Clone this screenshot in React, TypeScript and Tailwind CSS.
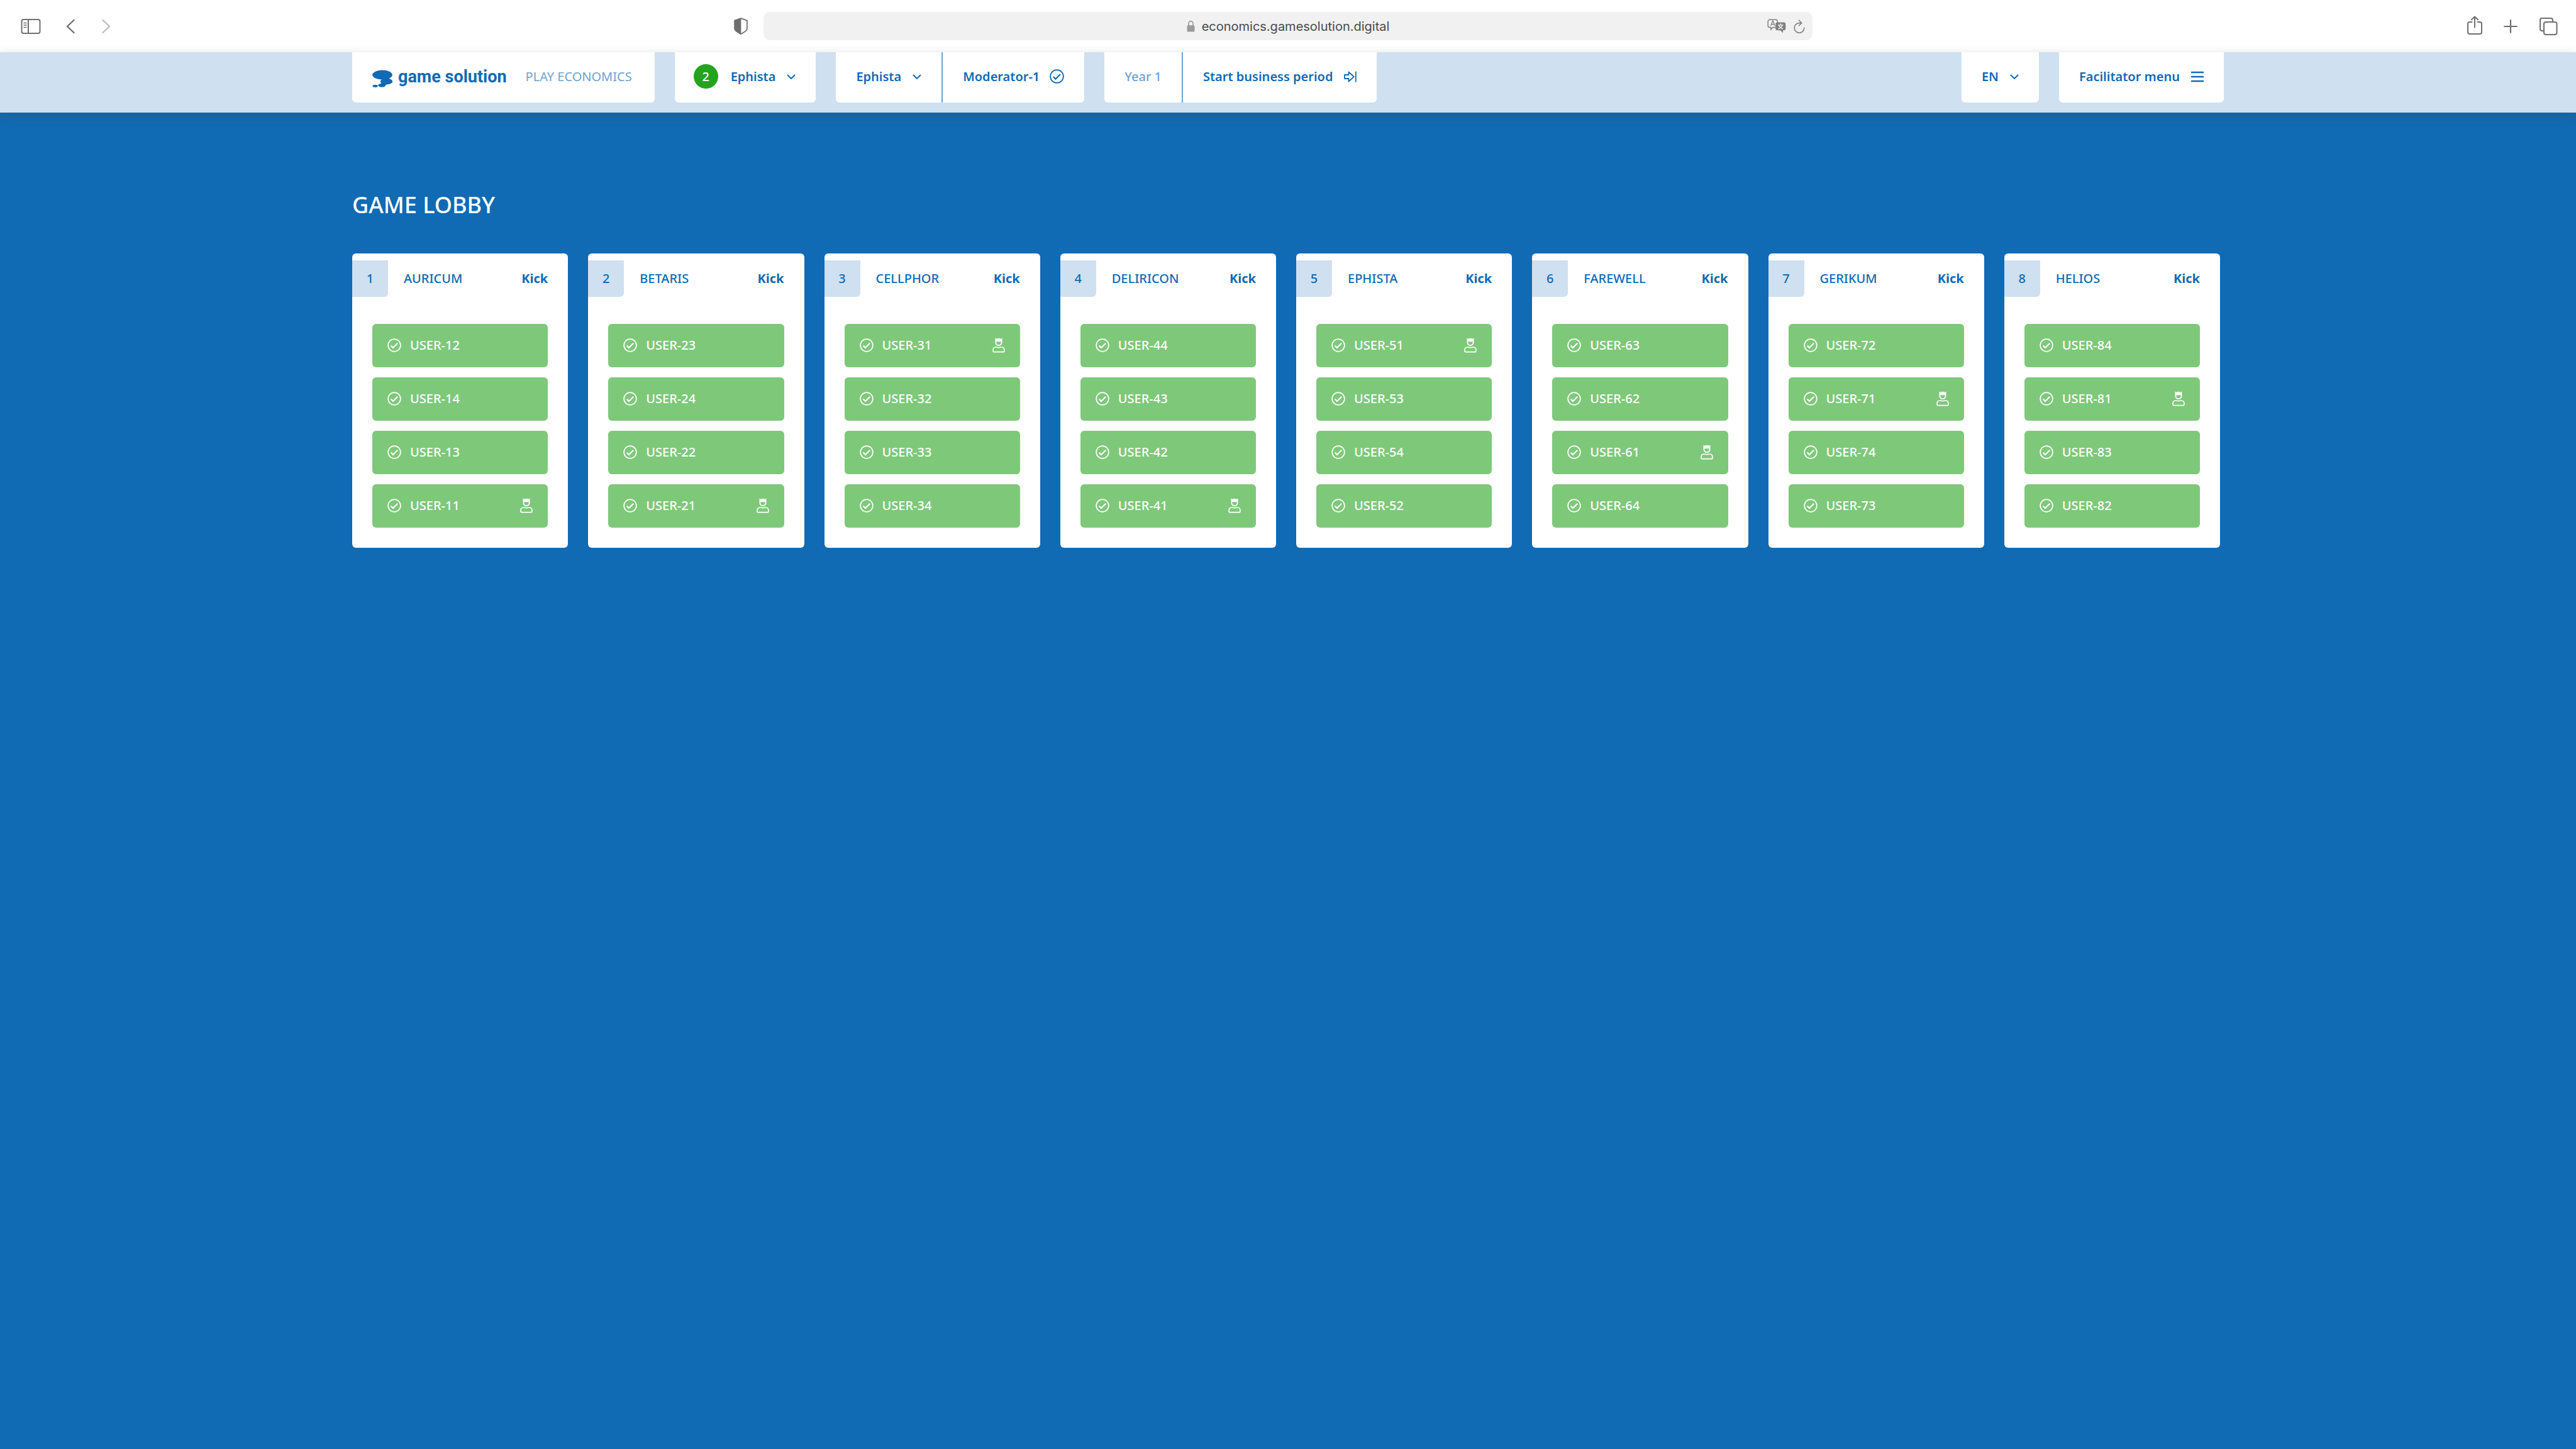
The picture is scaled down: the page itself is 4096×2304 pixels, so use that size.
import type { ReactNode } from "react";

type Team = { name: string; users: string[]; chief: string };

const teams: Team[] = [
  { name: "AURICUM", users: ["USER-12", "USER-14", "USER-13", "USER-11"], chief: "USER-11" },
  { name: "BETARIS", users: ["USER-23", "USER-24", "USER-22", "USER-21"], chief: "USER-21" },
  { name: "CELLPHOR", users: ["USER-31", "USER-32", "USER-33", "USER-34"], chief: "USER-31" },
  { name: "DELIRICON", users: ["USER-44", "USER-43", "USER-42", "USER-41"], chief: "USER-41" },
  { name: "EPHISTA", users: ["USER-51", "USER-53", "USER-54", "USER-52"], chief: "USER-51" },
  { name: "FAREWELL", users: ["USER-63", "USER-62", "USER-61", "USER-64"], chief: "USER-61" },
  { name: "GERIKUM", users: ["USER-72", "USER-71", "USER-74", "USER-73"], chief: "USER-71" },
  { name: "HELIOS", users: ["USER-84", "USER-81", "USER-83", "USER-82"], chief: "USER-81" },
];

const companyNames = ["Ephista", "Auricum", "Betaris", "Cellphor", "Deliricon", "Farewell", "Gerikum", "Helios"];

function CheckCircle({ className }: { className: string }) {
  return (
    <svg viewBox="0 0 22 22" className={className} fill="none" stroke="currentColor" aria-hidden="true">
      <circle cx="11" cy="11" r="9.9" strokeWidth="1.7" />
      <path d="M5.6 11.5 9 15l7.2-7.3" strokeWidth="2.1" />
    </svg>
  );
}

function Chief() {
  return (
    <svg viewBox="0 0 20 24" className="h-6 w-5 shrink-0" role="img" aria-label="Team lead">
      <path
        d="M4.5.6 7.2 1.7 10 .6l2.8 1.1L15.5.6V7.5a5.5 5.5 0 0 1-11 0ZM6.3 6.200v1.300a3.700 3.700 0 0 0 7.400 0V6.200Z"
        fill="white"
        fillRule="evenodd"
      />
      <path
        d="M5.200 15c1.800 0 2.600.6 4.800.6s3-.6 4.800-.6c2.700 0 4.200 2.300 4.200 5.200 0 1.600-.4 2.500-1.500 2.500h-15C1.400 22.700 1 21.800 1 20.200 1 17.300 2.500 15 5.200 15Z"
        fill="none"
        stroke="white"
        strokeWidth="1.7"
      />
    </svg>
  );
}

function Chevron() {
  return (
    <svg viewBox="0 0 14 8" className="pointer-events-none -ml-[14px] h-2 w-[14px]" fill="none" stroke="currentColor" aria-hidden="true">
      <path d="m1 1 6 6 6-6" strokeWidth="2" />
    </svg>
  );
}

function Dropdown({ label, options }: { label: string; options: string[] }) {
  return (
    <span className="flex items-center">
      <select
        aria-label={label}
        className="field-sizing-content h-full cursor-pointer appearance-none bg-transparent pr-8 font-semibold"
      >
        {options.map((o) => (
          <option key={o}>{o}</option>
        ))}
      </select>
      <Chevron />
    </span>
  );
}

function Tab({ children, className = "px-8" }: { children: ReactNode; className?: string }) {
  return <div className={`flex h-20 items-center rounded-b-md bg-white pb-[3px] ${className}`}>{children}</div>;
}

function Logo() {
  return (
    <a href="#home" className="flex items-center gap-[9px]">
      <svg viewBox="0 0 32 28" className="mt-[7px] h-7 w-8" fill="currentColor" aria-hidden="true">
        <ellipse cx="16" cy="8" rx="15.8" ry="7.5" />
        <path d="M14 14c3 .8 4-.4 5.500-.8h7c1.400.4 1.500 1 .6 1.600H20Z" />
        <ellipse cx="22.5" cy="18.5" rx="9.6" ry="4.9" />
        <path d="M14 20c1.500 2-1 2-2.500 2.600L20 25c1-.8 1-1.400 3-1.800Z" />
        <ellipse cx="15.3" cy="24.6" rx="6" ry="2.9" />
        <ellipse cx="4.7" cy="25.7" rx="4.2" ry="2" />
      </svg>
      <span className="font-['Roboto',sans-serif] text-[27px] leading-8 font-bold">game solution</span>
    </a>
  );
}

function BrowserBar() {
  return (
    <div className="grid h-[83px] grid-cols-[1fr_40.7%_1fr] items-center bg-white text-[#6f6f6f]">
      <div className="flex items-center pr-[25px] pl-[33px]">
        <button aria-label="Show sidebar">
          <svg viewBox="0 0 32 26" className="h-[26px] w-8" fill="none" stroke="currentColor" aria-hidden="true">
            <rect x="1.5" y="2" width="29" height="22" rx="3" strokeWidth="2" />
            <path d="M12 2v22" strokeWidth="2" />
            <path d="M5 7.500h4M5 11h4M5 14.500h4" strokeWidth="1.5" strokeLinecap="round" />
          </svg>
        </button>
        <button aria-label="Back" className="ml-10">
          <svg viewBox="0 0 14 24" className="h-6 w-[14px]" fill="none" stroke="currentColor" strokeWidth="2.4" strokeLinecap="round" strokeLinejoin="round" aria-hidden="true">
            <path d="M12.500 2 2 12l10.500 10" />
          </svg>
        </button>
        <button aria-label="Forward" className="ml-[43px] text-[#bdbdbd]">
          <svg viewBox="0 0 14 24" className="h-6 w-[14px]" fill="none" stroke="currentColor" strokeWidth="2.4" strokeLinecap="round" strokeLinejoin="round" aria-hidden="true">
            <path d="m1.500 2 10.500 10L1.500 22" />
          </svg>
        </button>
        <button aria-label="Privacy report" className="ml-auto">
          <svg viewBox="0 0 22 27" className="h-[27px] w-[22px]" aria-hidden="true">
            <path d="M11 1.200 20.900 4.600V18c0 2.500-4 5-9.900 8.200C5.100 23 1.100 20.500 1.100 18V4.600Z" fill="none" stroke="currentColor" strokeWidth="1.8" strokeLinejoin="round" />
            <path d="M11.400 1.200v24.800L11 26.200C5.100 23 1.100 20.500 1.100 18V4.600L11 1.200Z" fill="currentColor" />
          </svg>
        </button>
      </div>
      <div className="flex h-[45px] items-center rounded-[10px] bg-[#f1f1f1] px-3">
        <div className="flex-1" />
        <svg viewBox="0 0 13 19" className="mr-[11px] h-[19px] w-[13px] text-[#9b9b9b]" aria-hidden="true">
          <path d="M3 9V5.500a3.500 3.900 0 0 1 7 0V9" fill="none" stroke="currentColor" strokeWidth="1.7" />
          <rect x="0.5" y="8.3" width="12" height="10.2" rx="1.5" fill="currentColor" />
        </svg>
        <input
          aria-label="Address"
          defaultValue="economics.gamesolution.digital"
          className="field-sizing-content bg-transparent font-['Inter',sans-serif] text-[20px] leading-7 text-[#4a4a4a]"
        />
        <div className="flex flex-1 items-center justify-end gap-3 text-[#808080]">
          <button aria-label="Translate">
            <svg viewBox="0 0 30 23" className="h-[23px] w-[30px]" aria-hidden="true">
              <path d="M13 12.500v1H9l-3.200 3.300v-3.300H4A2.800 2.800 0 0 1 1.200 10.700V4A2.800 2.800 0 0 1 4 1.200h9.600A2.800 2.800 0 0 1 16.400 4v2" fill="none" stroke="currentColor" strokeWidth="1.5" />
              <path d="m5.700 11 3.200-8 3.200 8M6.700 8.600h4.300" fill="none" stroke="currentColor" strokeWidth="1.3" />
              <path d="M16 5.500h10.500A2.800 2.800 0 0 1 29.300 8.300v7.200a2.800 2.800 0 0 1-2.800 2.800H25V22.500l-4.200-4.200H16a2.800 2.800 0 0 1-2.800-2.800V8.300A2.800 2.800 0 0 1 16 5.500Z" fill="currentColor" />
              <path d="M21.200 7.300v2M17 9.800h8.500M18.600 10c.8 2.500 3 4.700 6.400 5.800M24 10c-.8 2.500-3 4.700-6.600 5.800" fill="none" stroke="#f1f1f1" strokeWidth="1.3" />
            </svg>
          </button>
          <button aria-label="Reload">
            <svg viewBox="0 0 18 22" className="h-[22px] w-[18px]" fill="none" stroke="currentColor" strokeWidth="1.6" strokeLinecap="round" strokeLinejoin="round" aria-hidden="true">
              <path d="M12.500 5.600H9A7.800 7.800 0 1 0 16.800 13.400" />
              <path d="m8.500 1.200 4.300 4.300-4.300 4.300" />
            </svg>
          </button>
        </div>
      </div>
      <div className="flex items-center justify-end gap-[34px] pr-[29px]">
        <button aria-label="Share">
          <svg viewBox="0 0 24 30" className="-mt-1 h-[30px] w-6" fill="none" stroke="currentColor" strokeWidth="2" strokeLinecap="round" strokeLinejoin="round" aria-hidden="true">
            <path d="M7.500 10H4a3 3 0 0 0-3 3v13a3 3 0 0 0 3 3h16a3 3 0 0 0 3-3V13a3 3 0 0 0-3-3h-3.500" />
            <path d="M12 18.500V1.500M7 6.300l5-4.800 5 4.800" />
          </svg>
        </button>
        <button aria-label="New tab">
          <svg viewBox="0 0 22 22" className="h-[22px] w-[22px]" fill="none" stroke="currentColor" strokeWidth="2.2" strokeLinecap="round" aria-hidden="true">
            <path d="M11 1.200v19.600M1.200 11h19.600" />
          </svg>
        </button>
        <button aria-label="Tab overview">
          <svg viewBox="0 0 30 28" className="h-7 w-[30px]" fill="none" stroke="currentColor" strokeWidth="2" aria-hidden="true">
            <rect x="8" y="7" width="20.5" height="20" rx="3" />
            <path d="M7.500 21H5a3 3 0 0 1-3-3V4a3 3 0 0 1 3-3h14a3 3 0 0 1 3 3v2.500" />
          </svg>
        </button>
      </div>
    </div>
  );
}

function GameHeader() {
  return (
    <header className="relative h-24 bg-[#cfe0f0] px-[560px] shadow-[0_6px_16px_rgba(80,80,80,0.3)]">
      <nav className="flex gap-8 font-semibold">
        <Tab className="pr-9 pl-8">
          <Logo />
          <span className="ml-[30px] font-normal text-[#6ea3d0]">PLAY ECONOMICS</span>
        </Tab>
        <Tab className="pr-8 pl-[30px]">
          <span className="mr-5 flex size-[39px] items-center justify-center rounded-full bg-[#25a31f] font-medium text-white">2</span>
          <Dropdown label="Company view" options={companyNames} />
        </Tab>
        <div className="flex gap-0.5 bg-[linear-gradient(#6ea3d0,#6ea3d0)] bg-[length:60%_100%] bg-center bg-no-repeat">
          <div className="flex h-20 items-center rounded-bl-md bg-white px-8 pb-[3px]">
            <Dropdown label="Company" options={companyNames} />
          </div>
          <button className="flex h-20 items-center gap-4 rounded-br-md bg-white px-8 pb-[3px]">
            Moderator-1
            <CheckCircle className="size-[23px]" />
          </button>
        </div>
        <div className="flex gap-0.5 bg-[linear-gradient(#6ea3d0,#6ea3d0)] bg-[length:80%_100%] bg-center bg-no-repeat">
          <div className="flex h-20 items-center rounded-bl-md bg-white px-8 pb-[3px] font-medium text-[#6ea3d0]">Year 1</div>
          <button className="flex h-20 items-center gap-[18px] rounded-br-md bg-white px-8 pb-[3px]">
            Start business period
            <svg viewBox="0 0 20 18" className="h-[18px] w-5" fill="none" stroke="currentColor" strokeWidth="1.8" strokeLinejoin="round" aria-hidden="true">
              <path d="M1 6h6.500V1.500L15.800 9l-8.300 7.500V12H1Z" />
              <path d="M18.800.5v17" />
            </svg>
          </button>
        </div>
        <Tab className="ml-auto px-8">
          <Dropdown label="Language" options={["EN", "DE"]} />
        </Tab>
        <button className="flex h-20 items-center gap-[18px] rounded-b-md bg-white px-8 pb-[3px]">
          Facilitator menu
          <svg viewBox="0 0 20 18" className="h-[18px] w-5" stroke="currentColor" strokeWidth="2.4" aria-hidden="true">
            <path d="M0 2h20M0 9h20M0 16h20" />
          </svg>
        </button>
      </nav>
    </header>
  );
}

function TeamCard({ team, number }: { team: Team; number: number }) {
  return (
    <section className="rounded-md bg-white pt-[11px] pb-8">
      <div className="flex h-[58px] items-center pr-8">
        <span className="flex h-full w-[57px] items-center justify-center rounded-br-md bg-[#cfe0f0]">{number}</span>
        <h2 className="ml-[25px]">{team.name}</h2>
        <button className="ml-auto font-bold">Kick</button>
      </div>
      <ul className="mt-[43px] flex flex-col gap-4 px-8">
        {team.users.map((user) => (
          <li key={user} className="flex h-[69px] items-center rounded-md bg-[#7ec87a] px-6 pb-0.5 text-white">
            <CheckCircle className="mr-[14px] size-[22px] shrink-0" />
            <span className="flex-1">{user}</span>
            {user === team.chief && <Chief />}
          </li>
        ))}
      </ul>
    </section>
  );
}

export default function App() {
  return (
    <div className="min-h-screen bg-[#106ab4] font-['Noto_Sans',sans-serif] text-[20px] leading-7 text-[#106ab4]">
      <BrowserBar />
      <GameHeader />
      <main className="px-[560px] pt-[123px]">
        <h1 className="mb-[53px] text-[36px] leading-[48px] font-medium text-white">GAME LOBBY</h1>
        <div className="grid grid-cols-8 gap-8 pr-1.5 font-medium">
          {teams.map((team, i) => (
            <TeamCard key={team.name} team={team} number={i + 1} />
          ))}
        </div>
      </main>
    </div>
  );
}
